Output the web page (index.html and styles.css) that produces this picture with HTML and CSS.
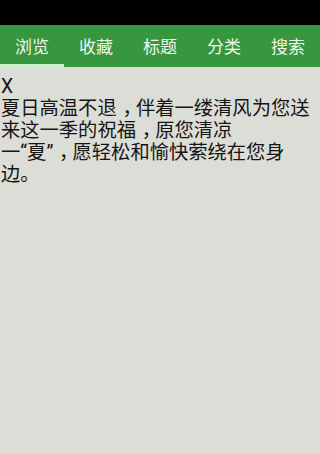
FILE: index.html
```html
<!DOCTYPE html>
<html lang="zh-CN">
<head>
<meta charset="utf-8">
<link rel="stylesheet" href="styles.css">
</head>
<body>
<div class="status"></div>
<nav class="tabs">
  <div class="tab active">浏览</div>
  <div class="tab">收藏</div>
  <div class="tab">标题</div>
  <div class="tab">分类</div>
  <div class="tab">搜索</div>
</nav>
<main class="content">
  <p class="text">X<br>夏日高温不退<span class="punct">，</span>伴着一缕清风为您送来这一季的祝福<span class="punct">，</span>原您清凉<br>一“夏”<span class="punct">，</span>愿轻松和愉快萦绕在您身边。</p>
</main>
</body>
</html>
```
FILE: styles.css
```css
html, body {
  margin: 0;
  padding: 0;
  height: 100%;
  background: #dcddd6;
  font-family: "Noto Sans CJK SC", "Noto Sans", sans-serif;
}
.status {
  height: 25px;
  background: #000;
}
.tabs {
  display: grid;
  grid-template-columns: repeat(5, 1fr);
  height: 42px;
  background: #37973f;
}
.tab {
  position: relative;
  display: flex;
  align-items: center;
  justify-content: center;
  color: #eef5ec;
  font-size: 17px;
  padding-bottom: 2px;
}
.tab.active::after {
  content: "";
  position: absolute;
  left: 0;
  right: 0;
  bottom: 0;
  height: 3px;
  background: #c9f3c6;
}
.content {
  padding: 9px 1px 0 1px;
}
.text {
  margin: 0;
  font-family: Roboto, "Noto Sans CJK SC", sans-serif;
  font-size: 19.3px;
  line-height: 22px;
  color: #151515;
}
.punct {
  padding-left: 0.3em;
  margin-right: -0.3em;
}
```
